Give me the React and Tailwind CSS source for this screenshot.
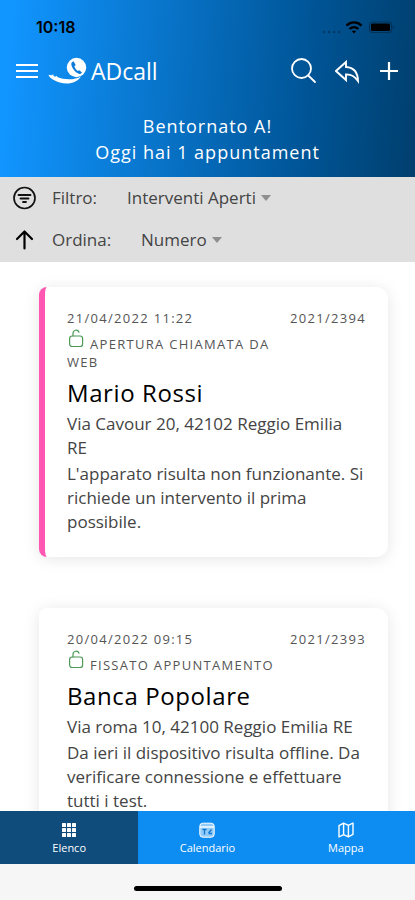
/**
 * ADcall mobile home — list of open service calls with filter/sort bar
 * and bottom tab navigation.
 */

const calls = [
  {
    id: "2021/2394",
    date: "21/04/2022 11:22",
    status: "Apertura chiamata da web",
    customer: "Mario Rossi",
    address: "Via Cavour 20, 42102 Reggio Emilia RE",
    notes: "L'apparato risulta non funzionante. Si richiede un intervento il prima possibile.",
    urgent: true,
  },
  {
    id: "2021/2393",
    date: "20/04/2022 09:15",
    status: "Fissato appuntamento",
    customer: "Banca Popolare",
    address: "Via roma 10, 42100 Reggio Emilia RE",
    notes: "Da ieri il dispositivo risulta offline. Da verificare connessione e effettuare tutti i test.",
    urgent: false,
  },
];

const tabs = [
  { label: "Elenco", icon: <GridIcon />, active: true },
  { label: "Calendario", icon: <CalendarIcon /> },
  { label: "Mappa", icon: <MapIcon /> },
];

function GridIcon() {
  return (
    <svg className="size-4" viewBox="0 0 16 16" fill="currentColor">
      {[1, 6, 11].map((y) =>
        [1, 6, 11].map((x) => <rect key={`${x}-${y}`} x={x} y={y} width="4" height="4" rx="0.6" />)
      )}
    </svg>
  );
}

function CalendarIcon() {
  return (
    <svg className="size-4" viewBox="0 0 16 16" fill="none" stroke="currentColor">
      <rect x="0.8" y="1.2" width="14.4" height="14" rx="3" fill="currentColor" fillOpacity="0.55" />
      <path d="M1 5h14" strokeWidth="1.4" />
      <path d="M3.5 7.5h4M5.5 7.5v5M9.5 11l3-3.5M9.5 11.5h3.5" stroke="#0d76cf" strokeWidth="1.3" />
    </svg>
  );
}

function MapIcon() {
  return (
    <svg className="size-4" viewBox="0 0 16 16" fill="none" stroke="currentColor" strokeWidth="1.4" strokeLinejoin="round">
      <path d="M1 3.6 5.6 1.2v11.4L1 15z" />
      <path d="M5.6 1.2 10.4 3.4v11.4l-4.8-2.2" />
      <path d="M10.4 3.4 15 1v11.4l-4.6 2.4" />
    </svg>
  );
}

function UnlockIcon() {
  return (
    <svg className="inline-block w-[18px] h-5 mr-[5px] align-baseline text-[#4c9a56]" viewBox="0 0 18 20" fill="none" stroke="currentColor" strokeWidth="1.2" strokeLinecap="round">
      <rect x="2.6" y="7" width="13" height="10.5" rx="2.6" />
      <path d="M6 7V4.200a3.1 3.1 0 0 1 6-1" />
    </svg>
  );
}

function Logo() {
  return (
    <div className="flex items-center gap-[3px]">
      <svg className="w-10 h-7" viewBox="0 0 40 28">
        <circle cx="28.5" cy="10.5" r="9.7" fill="#fff" />
        <path d="M25.5 4.2c-2 .7-2.6 2.3-2 4.2 1.1 3.5 3.6 6.6 6.8 8.2 1.5.7 3 .1 3.7-1.200l-2.7-2.2-1.5.9c-1.6-1.2-2.8-2.9-3.4-4.8l1.3-1.2z" fill="#0a7bd8" />
        <path d="M.5 17.8c.6 2 2.2 3.6 4.4 4.6 9.4 5.800 22.6 6 28.2-3.2-6 4-16.4 4-23.8.9l-.7-1.4-1.3 1.1-1.7-.8-.5-1.7-1.4 1z" fill="#fff" />
      </svg>
      <span className="text-[23px] leading-7">ADcall</span>
    </div>
  );
}

function StatusBar() {
  return (
    <div className="flex items-center justify-between h-6 pl-9 pr-5 text-black">
      <span className="font-['Inter',sans-serif] text-base font-semibold">10:18</span>
      <div className="flex items-center gap-1">
        <svg className="w-5 h-4" viewBox="0 0 20 16" fill="#003a68">
          {[3, 8, 13, 18].map((x) => <circle key={x} cx={x} cy="13" r="1.3" />)}
        </svg>
        <svg className="w-[18px] h-4" viewBox="0 0 18 16" fill="none" stroke="currentColor" strokeWidth="2.3">
          <path d="M1.5 6.6c4.3-4.2 10.7-4.2 15 0" />
          <path d="M4.6 10c2.5-2.5 6.3-2.5 8.8 0" />
          <path d="M9 14.5 6.9 12.3c1.2-1 3-1 4.2 0z" fill="currentColor" stroke="none" />
        </svg>
        <svg className="w-7 h-4" viewBox="0 0 28 16">
          <rect x="2.5" y="3" width="22" height="10.5" rx="3" fill="none" stroke="#003257" strokeWidth="1.2" />
          <rect x="4" y="4.5" width="19" height="7.5" rx="1.5" fill="currentColor" />
          <path d="M25.8 6.3v4c1.600-.9 1.600-3.100 0-4z" fill="#003257" />
        </svg>
      </div>
    </div>
  );
}

function Header() {
  return (
    <header className="bg-[linear-gradient(94deg,#1195ff_3%,#005597_73%,#003f6e)] pt-[15px] pb-3 text-white">
      <StatusBar />
      <div className="flex items-center justify-between h-[52px] mt-[6px] px-4">
        <div className="flex items-center gap-[10px]">
          <button type="button" aria-label="Menu">
            <svg className="w-[22px] h-5" viewBox="0 0 22 20" stroke="currentColor" strokeWidth="2.2">
              <path d="M0 4h22M0 10h22M0 16h22" />
            </svg>
          </button>
          <Logo />
        </div>
        <div className="flex items-center gap-[18px]">
          <button type="button" aria-label="Cerca">
            <svg className="size-[26px]" viewBox="0 0 26 26" fill="none" stroke="currentColor" strokeWidth="1.8" strokeLinecap="round">
              <circle cx="10.5" cy="10.5" r="9.5" />
              <path d="m17.3 17.5 6.7 6.5" />
            </svg>
          </button>
          <button type="button" aria-label="Indietro">
            <svg className="size-[26px]" viewBox="0 0 26 26" fill="none" stroke="currentColor" strokeWidth="1.9" strokeLinejoin="miter">
              <path d="M11 4 1 13l10 9v-5.500c5.200-.3 8.200 1.200 12 6.500-.2-8.500-4-13.500-12-14z" />
            </svg>
          </button>
          <button type="button" aria-label="Aggiungi">
            <svg className="size-5" viewBox="0 0 20 20" stroke="currentColor" strokeWidth="2.2">
              <path d="M10 1v18M1 10h18" />
            </svg>
          </button>
        </div>
      </div>
      <div className="mt-4 text-center text-lg leading-[26px] tracking-[1px] font-medium">
        <h1>Bentornato A!</h1>
        <p>Oggi hai 1 appuntament</p>
      </div>
    </header>
  );
}

function BarSelect({ id, label, value, icon, className }) {
  return (
    <div className="flex items-center h-[42px] pl-3">
      {icon}
      <label htmlFor={id} className="w-[75px] ml-[14px]">{label}</label>
      <div className={`flex items-center ${className}`}>
        <select id={id} defaultValue={value} className="appearance-none field-sizing-content bg-transparent p-0">
          <option>{value}</option>
        </select>
        <svg className="w-3 h-2 ml-1 text-[#8f8f8f]" viewBox="0 0 12 8" fill="currentColor">
          <path d="M1 1h10L6 7z" />
        </svg>
      </div>
    </div>
  );
}

function FilterBar() {
  return (
    <section className="bg-[#dfdfdf] pb-px text-[17px] text-[#444]">
      <BarSelect
        id="filtro"
        label="Filtro:"
        value="Interventi Aperti"
        className=""
        icon={
          <svg className="size-[26px]" viewBox="0 0 26 26" fill="none" stroke="#111" strokeWidth="1.7" strokeLinecap="round">
            <circle cx="12.500" cy="13" r="10.5" />
            <path d="M6.500 10h12M8.500 13.500h8M11 17h3" strokeWidth="1.8" />
          </svg>
        }
      />
      <BarSelect
        id="ordina"
        label="Ordina:"
        value="Numero"
        className="ml-[14px]"
        icon={
          <svg className="size-[26px]" viewBox="0 0 26 26" fill="none" stroke="#000" strokeWidth="2.2" strokeLinecap="round" strokeLinejoin="round">
            <path d="M12.500 21.500V5M5 12l7.500-7.500L20 12" />
          </svg>
        }
      />
    </section>
  );
}

function CallCard({ call }) {
  return (
    <article
      className={`rounded-l-lg rounded-r-xl border-l-[6px] bg-white pt-[22px] px-[22px] pb-[23px] shadow-[0_2px_16px_rgba(0,0,0,0.1)] ${
        call.urgent ? "border-[#ff57b2]" : "border-white"
      }`}
    >
      <div className="flex justify-between text-[13px] leading-[18px] tracking-widest text-[#555]">
        <time>{call.date}</time>
        <span>{call.id}</span>
      </div>
      <p className="w-9/12 mt-[2px] text-[13px] leading-[18px] tracking-widest uppercase text-[#555]">
        <UnlockIcon />
        {call.status}
      </p>
      <h2 className="mt-[6px] text-2xl leading-8 tracking-wide text-black">{call.customer}</h2>
      <p className="mt-[3px] text-[17px] leading-6 text-[#444]">{call.address}</p>
      <p className="mt-[2px] text-[17px] leading-6 text-[#444]">{call.notes}</p>
    </article>
  );
}

function TabBar() {
  return (
    <nav className="grid grid-cols-3 h-[53px] bg-[#0d8df2] text-white text-[11px] leading-4">
      {tabs.map((tab) => (
        <button
          key={tab.label}
          type="button"
          className={`flex flex-col items-center justify-center gap-[2px] pt-[3px] ${tab.active ? "bg-[#0f4c7b]" : ""}`}
        >
          {tab.icon}
          {tab.label}
        </button>
      ))}
    </nav>
  );
}

export default function App() {
  return (
    <div className="flex flex-col h-screen bg-white font-['Open_Sans',sans-serif]">
      <Header />
      <FilterBar />
      <main className="flex-1 min-h-0 overflow-hidden pt-[25px] pl-[39px] pr-[27px] space-y-[51px]">
        {calls.map((call) => (
          <CallCard key={call.id} call={call} />
        ))}
      </main>
      <TabBar />
      <footer className="flex justify-center h-9 pt-[22px] bg-[#f6f6f6]">
        <div className="w-[148px] h-[5px] rounded-full bg-black" />
      </footer>
    </div>
  );
}
